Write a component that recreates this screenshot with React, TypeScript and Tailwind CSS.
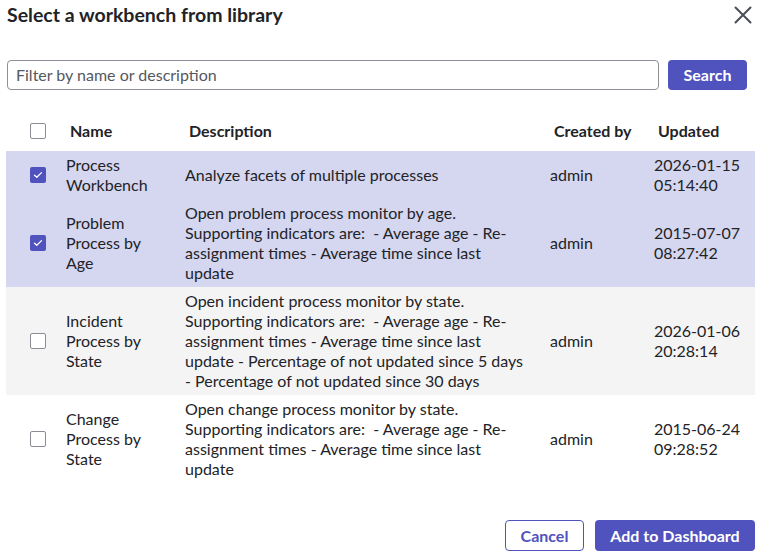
import React from "react";

const rows = [
  {
    checked: true,
    name: "Process Workbench",
    desc: "Analyze facets of multiple processes",
    by: "admin",
    date: "2026-01-15",
    time: "05:14:40",
    bg: "bg-[#d5d6ef]",
  },
  {
    checked: true,
    name: "Problem Process by Age",
    desc: "Open problem process monitor by age. Supporting indicators are:\u00a0 - Average age - Re-assignment times - Average time since last update",
    by: "admin",
    date: "2015-07-07",
    time: "08:27:42",
    bg: "bg-[#d5d6ef]",
  },
  {
    checked: false,
    name: "Incident Process by State",
    desc: "Open incident process monitor by state. Supporting indicators are:\u00a0 - Average age - Re-assignment times - Average time since last update - Percentage of not updated since 5 days - Percentage of not updated since 30 days",
    by: "admin",
    date: "2026-01-06",
    time: "20:28:14",
    bg: "bg-[#f4f4f5]",
  },
  {
    checked: false,
    name: "Change Process by State",
    desc: "Open change process monitor by state. Supporting indicators are:\u00a0 - Average age - Re-assignment times - Average time since last update",
    by: "admin",
    date: "2015-06-24",
    time: "09:28:52",
    bg: "bg-white",
  },
];

function Check({ checked }: { checked: boolean }) {
  if (checked) {
    return (
      <div className="w-4 h-4 rounded-[2px] bg-[#5052bd] flex items-center justify-center">
        <svg width="10" height="8" viewBox="0 0 10 8" fill="none">
          <path d="M1.5 4.2 L3.8 6.3 L8.5 1.6" stroke="white" strokeWidth="1.3" strokeLinecap="round" strokeLinejoin="round" />
        </svg>
      </div>
    );
  }
  return <div className="w-4 h-4 rounded-[2px] border border-[#8a8d94] bg-white" />;
}

export default function App() {
  return (
    <div
      className="w-[761px] h-[557px] bg-white text-[#222327] relative"
      style={{ fontFamily: "Lato, 'Noto Sans', sans-serif" }}
    >
      <div className="flex items-center justify-between pl-[7px] pr-[9px] h-[30px]">
        <h1 className="text-[19.5px] font-bold leading-[30px]">Select a workbench from library</h1>
        <svg width="18" height="18" viewBox="0 0 18 18">
          <path d="M1.5 1.5 L16.5 16.5 M16.5 1.5 L1.5 16.5" stroke="#4a4e56" strokeWidth="2" strokeLinecap="round" />
        </svg>
      </div>

      <div className="flex gap-[9px] pl-[7px] pr-[14px] mt-[30px]">
        <div className="flex-1 h-[30px] border border-[#8c9099] rounded-[4px] flex items-center pl-[8px] text-[16px] text-[#55585e]">
          Filter by name or description
        </div>
        <button className="w-[79px] h-[30px] rounded-[4px] bg-[#5052bd] text-white text-[16px] font-bold">
          Search
        </button>
      </div>

      <table className="table-fixed border-collapse ml-[6px] mt-[20px] w-[749px] text-[16px] leading-[20px]">
        <colgroup>
          <col className="w-[60px]" />
          <col className="w-[119px]" />
          <col className="w-[365px]" />
          <col className="w-[104px]" />
          <col className="w-[101px]" />
        </colgroup>
        <thead>
          <tr className="h-[41px] text-left">
            <th className="pl-[24px] align-middle">
              <Check checked={false} />
            </th>
            <th className="pl-[4px] font-bold">Name</th>
            <th className="pl-[4px] font-bold">Description</th>
            <th className="pl-[4px] font-bold">Created by</th>
            <th className="pl-[4px] font-bold">Updated</th>
          </tr>
        </thead>
        <tbody>
          {rows.map((r, i) => (
            <tr key={i} className={r.bg}>
              <td className="pl-[24px] align-middle">
                <Check checked={r.checked} />
              </td>
              <td className="py-[4px] pr-[22px] align-middle">{r.name}</td>
              <td className="py-[4px] pr-[26px] align-middle">{r.desc}</td>
              <td className="py-[4px] align-middle">{r.by}</td>
              <td className="py-[4px] align-middle">
                {r.date}
                <br />
                {r.time}
              </td>
            </tr>
          ))}
        </tbody>
      </table>

      <div className="absolute left-0 right-[6px] top-[520px] flex justify-end gap-[11px]">
        <button className="w-[79px] h-[31px] rounded-[4px] border border-[#5052bd] text-[#5052bd] text-[16px] font-bold bg-white">
          Cancel
        </button>
        <button className="w-[160px] h-[31px] rounded-[4px] bg-[#5052bd] text-white text-[16px] font-bold">
          Add to Dashboard
        </button>
      </div>
    </div>
  );
}
